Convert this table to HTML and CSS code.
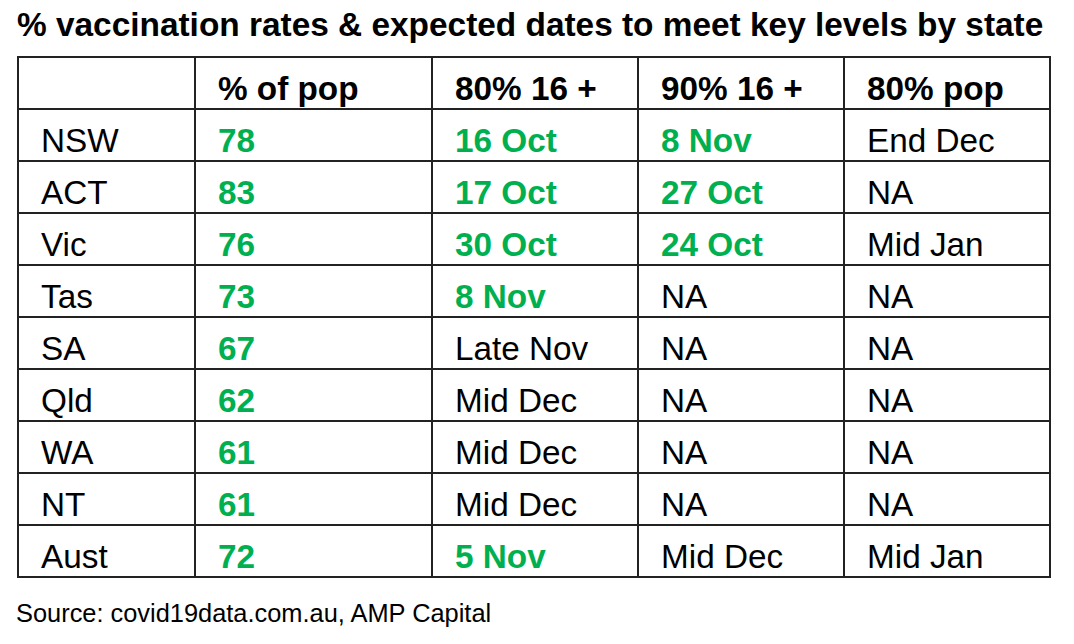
FILE: index.html
```html
<!DOCTYPE html>
<html lang="en">
<head>
<meta charset="utf-8">
<title>Vaccination rates by state</title>
<link rel="stylesheet" href="styles.css">
</head>
<body>
<div class="page">
  <h1 class="title">% vaccination rates &amp; expected dates to meet key levels by state</h1>
  <table class="vax">
    <colgroup>
      <col class="c1"><col class="c2"><col class="c3"><col class="c4"><col class="c5">
    </colgroup>
    <thead>
      <tr><th></th><th>% of pop</th><th>80% 16 +</th><th>90% 16 +</th><th>80% pop</th></tr>
    </thead>
    <tbody>
      <tr><td>NSW</td><td class="g">78</td><td class="g">16 Oct</td><td class="g">8 Nov</td><td>End Dec</td></tr>
      <tr><td>ACT</td><td class="g">83</td><td class="g">17 Oct</td><td class="g">27 Oct</td><td>NA</td></tr>
      <tr><td>Vic</td><td class="g">76</td><td class="g">30 Oct</td><td class="g">24 Oct</td><td>Mid Jan</td></tr>
      <tr><td>Tas</td><td class="g">73</td><td class="g">8 Nov</td><td>NA</td><td>NA</td></tr>
      <tr><td>SA</td><td class="g">67</td><td>Late Nov</td><td>NA</td><td>NA</td></tr>
      <tr><td>Qld</td><td class="g">62</td><td>Mid Dec</td><td>NA</td><td>NA</td></tr>
      <tr><td>WA</td><td class="g">61</td><td>Mid Dec</td><td>NA</td><td>NA</td></tr>
      <tr><td>NT</td><td class="g">61</td><td>Mid Dec</td><td>NA</td><td>NA</td></tr>
      <tr><td>Aust</td><td class="g">72</td><td class="g">5 Nov</td><td>Mid Dec</td><td>Mid Jan</td></tr>
    </tbody>
  </table>
  <p class="source">Source: covid19data.com.au, AMP Capital</p>
</div>
</body>
</html>
```

FILE: styles.css
```css
html, body {
  margin: 0;
  padding: 0;
  background: #ffffff;
}

.page {
  padding: 8px 0 0 17px;
  font-family: "Liberation Sans", Arial, sans-serif;
  color: #000000;
}

.title {
  margin: 0 0 15px 0;
  font-size: 33.4px;
  line-height: 33px;
  font-weight: bold;
  white-space: nowrap;
}

.vax {
  border-collapse: collapse;
  table-layout: fixed;
  width: 1034px;
  border: 2px solid #222222;
}

.c1 { width: 177px; }
.c2 { width: 237px; }
.c3 { width: 206px; }
.c4 { width: 206px; }
.c5 { width: 206px; }

.vax th,
.vax td {
  border: 2px solid #222222;
  height: 47px;
  padding: 0 0 3px 22px;
  vertical-align: bottom;
  text-align: left;
  font-size: 33.3px;
  line-height: 32px;
  white-space: nowrap;
}

.vax th {
  font-weight: bold;
}

.vax td.g {
  color: #00b050;
  font-weight: bold;
}

.source {
  margin: 21px 0 0 -1px;
  font-size: 25.4px;
  line-height: 28px;
}
```
